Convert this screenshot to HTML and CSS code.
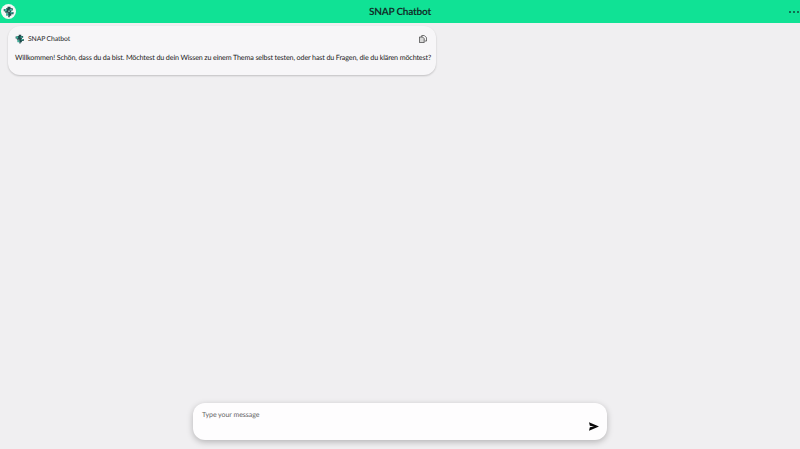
FILE: index.html
```html
<!DOCTYPE html>
<html lang="en">
<head>
    <meta charset="UTF-8">
    <meta name="viewport" content="width=device-width, initial-scale=1.0">
    <title>SNAP Chatbot</title>
    <link rel="stylesheet" href="styles.css">
</head>
<body>
    <header class="topbar">
        <div class="topbar-logo">
            <svg class="tree" viewBox="0 0 16 16" width="12" height="12">
                <path fill="#1f4a4c" d="M6 1h4v2h3v3h-2v2h3v3h-3v2H9v2H7v-3H4v-2h3V9H3V7H1V4h3V3h2z"/>
                <path fill="#3fb8a0" d="M2 4h3v3H2zM9 4h3v2H9zM4 10h3v3H4zM10 8h3v2h-3z"/>
                <path fill="#9fb4b2" d="M7 6h2v2H7z"/>
            </svg>
        </div>
        <h1>SNAP Chatbot</h1>
        <div class="topbar-menu"><span></span><span></span><span></span></div>
    </header>

    <main class="chat">
        <div class="bubble">
            <div class="bubble-head">
                <svg class="tree" viewBox="0 0 16 16" width="10" height="10">
                    <path fill="#1f4a4c" d="M6 1h4v2h3v3h-2v2h3v3h-3v2H9v2H7v-3H4v-2h3V9H3V7H1V4h3V3h2z"/>
                    <path fill="#3fb8a0" d="M2 4h3v3H2zM9 4h3v2H9zM4 10h3v3H4zM10 8h3v2h-3z"/>
                </svg>
                <span class="bubble-name">SNAP Chatbot</span>
                <svg class="copy-icon" viewBox="0 0 10 10" width="8" height="8">
                    <path fill="none" stroke="#444" stroke-width="1" d="M3.500 2.500V.5h3L9.500 3.500V7.500H7.500"/>
                    <path fill="#d8d8d8" stroke="#444" stroke-width="1" d="M.5 2.500h4l2 2v5H.5z"/>
                </svg>
            </div>
            <p class="bubble-text">Willkommen! Schön, dass du da bist. Möchtest du dein Wissen zu einem Thema selbst testen, oder hast du Fragen, die du klären möchtest?</p>
        </div>
    </main>

    <footer class="composer-wrap">
        <div class="composer">
            <span class="placeholder">Type your message</span>
            <svg class="send-icon" viewBox="0 0 12 10" width="10" height="9">
                <path fill="#0a0a0a" d="M0 0l12 5L0 10l1-4 5-1-5-1z"/>
            </svg>
        </div>
    </footer>
</body>
</html>
```

FILE: styles.css
```css
* {
    margin: 0;
    padding: 0;
    box-sizing: border-box;
}

body {
    height: 449px;
    display: flex;
    flex-direction: column;
    overflow: hidden;
    font-family: "Lato", sans-serif;
    text-rendering: geometricPrecision;
    background-color: #f0eff1;
    color: #1c1c1c;
}

/* Header */
.topbar {
    height: 23px;
    display: grid;
    grid-template-columns: 1fr auto 1fr;
    align-items: center;
    padding: 0 1px;
    background-color: #10e295;
}

.topbar h1 {
    font-size: 10px;
    font-weight: 700;
    letter-spacing: -0.2px;
    color: #10302a;
}

.topbar-logo {
    width: 15px;
    height: 15px;
    display: flex;
    align-items: center;
    justify-content: center;
    border-radius: 50%;
    background-color: #f4f8f6;
}

.topbar-menu {
    justify-self: end;
    display: flex;
    gap: 2px;
}

.topbar-menu span {
    width: 2px;
    height: 2px;
    background-color: #0f6f52;
}

/* Chat */
.chat {
    flex: 1;
    padding: 3px 8px;
}

.bubble {
    width: 428px;
    height: 49px;
    padding: 8px 7px;
    border-radius: 12px;
    background-color: #f7f6f8;
    box-shadow: 0 1px 2px rgba(0, 0, 0, 0.2);
}

.bubble-head {
    display: flex;
    align-items: center;
    gap: 3px;
    height: 10px;
    margin-bottom: 9px;
}

.bubble-name {
    flex: 1;
    font-size: 6.800px;
    letter-spacing: -0.1px;
}

.copy-icon {
    margin-right: 2px;
}

.bubble-text {
    font-size: 7.200px;
    letter-spacing: -0.15px;
    line-height: 10px;
    white-space: nowrap;
}

/* Input */
.composer-wrap {
    display: flex;
    justify-content: center;
    padding-bottom: 9px;
}

.composer {
    width: 414px;
    height: 37px;
    display: flex;
    justify-content: space-between;
    padding: 8px 8px 9px 9px;
    border-radius: 12px;
    background-color: #fefdfe;
    box-shadow: 0 2px 6px rgba(0, 0, 0, 0.25);
}

.placeholder {
    font-size: 7px;
    letter-spacing: -0.05px;
    color: #666;
}

.send-icon {
    align-self: flex-end;
}
```
